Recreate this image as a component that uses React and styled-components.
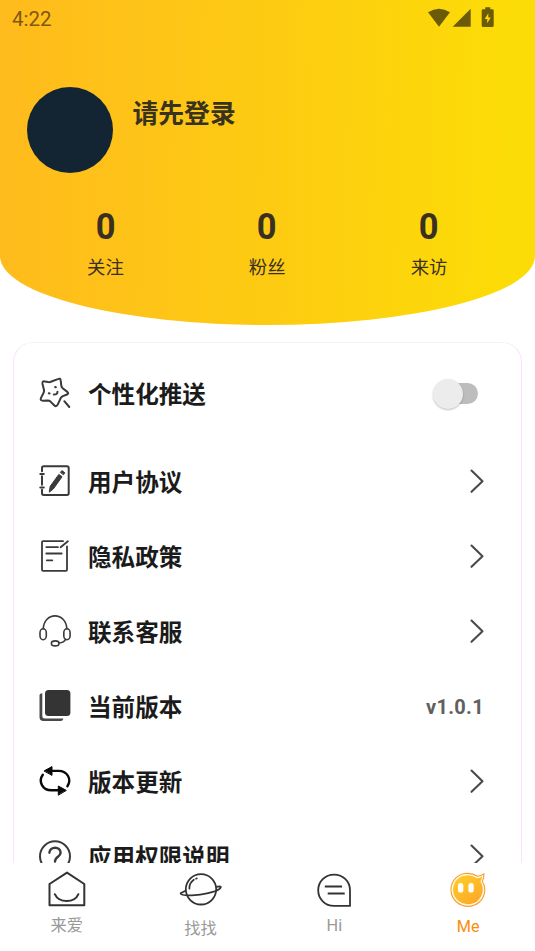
import React from "react"
import styled, { createGlobalStyle } from "styled-components"

const GlobalStyle = createGlobalStyle`
    * {
        box-sizing: border-box;
    }
    body {
        margin: 0;
        background: #fff;
        font-family: Roboto, "Noto Sans CJK SC", sans-serif;
    }
    svg {
        display: block;
        overflow: visible;
        flex-shrink: 0;
    }
`

const Screen = styled.div`
    display: flex;
    flex-direction: column;
    width: 535px;
    height: 951px;
    overflow: hidden;
    background: #fff;
`

const Header = styled.header`
    flex-shrink: 0;
    height: 325px;
    background: linear-gradient(91deg, #ffbb1d 0%, #fdcb12 50%, #fcdc06 95%);
    border-radius: 0 0 50% 50% / 0 0 69px 69px;
`

const StatusBar = styled.div`
    display: flex;
    justify-content: space-between;
    height: 38px;
    padding: 0 41px 0 12px;
    color: #80590f;
    font-size: 20.5px;
    line-height: 38px;
`

const StatusIcons = styled.div`
    display: flex;
    padding-top: 7px;
    color: #6b5a08;
`

const Profile = styled.div`
    display: flex;
    padding: 49px 0 0 26.5px;
`

const Avatar = styled.div`
    width: 86px;
    height: 86px;
    border-radius: 50%;
    background: #132432;
`

const LoginText = styled.div`
    margin: 8px 0 0 20px;
    color: #38321f;
    font-size: 25.8px;
    font-weight: 700;
    line-height: 38px;
`

const Stats = styled.div`
    display: flex;
    padding: 30px 25px 0 24.5px;
`

const Stat = styled.div`
    flex: 1;
    display: flex;
    flex-direction: column;
    align-items: center;
    color: #3a3022;
`

const StatNumber = styled.span`
    padding-top: 1px;
    font-size: 37.5px;
    font-weight: 700;
    line-height: 44px;
    transform: scaleX(0.92);
`

const StatLabel = styled.span`
    margin-top: 6px;
    font-size: 18.4px;
    line-height: 28px;
`

const Card = styled.main`
    flex: 1;
    min-height: 0;
    margin: 17px 13px 0;
    overflow: hidden;
    border: 1px solid #fae3fd;
    border-top-color: #f7f1f8;
    border-bottom: none;
    border-radius: 20px 20px 0 0;
`

const Row = styled.div`
    display: flex;
    align-items: center;
    height: ${({ $height }) => $height || 75}px;
    padding: 0 37px 0 24px;
`

const RowLabel = styled.span`
    flex: 1;
    margin-left: 16px;
    padding-top: 2px;
    color: #1b1b1b;
    font-size: 23.6px;
    font-weight: 700;
    line-height: 34px;
`

const Version = styled.span`
    color: #606060;
    font-size: 20px;
    font-weight: 700;
    letter-spacing: 0.3px;
`

const Switch = styled.div`
    display: flex;
    align-items: center;
    width: 40px;
    height: 21px;
    margin-right: 6px;
    border-radius: 11px;
    background: #bdbdbd;
`

const Knob = styled.div`
    flex-shrink: 0;
    width: 30px;
    height: 30px;
    margin-left: -5.5px;
    border-radius: 50%;
    background: #ececec;
    box-shadow: 0 1px 2px rgba(0, 0, 0, 0.25);
`

const TabBar = styled.nav`
    display: flex;
    flex-shrink: 0;
    height: 88px;
    background: #fff;
`

const Tab = styled.div`
    flex: 1;
    display: flex;
    flex-direction: column;
    align-items: center;
    padding-top: 6px;
`

const TabLabel = styled.span`
    margin-top: ${({ $gap }) => $gap || 3}px;
    color: ${({ $active }) => ($active ? "#f98e10" : "#999")};
    font-size: 16.3px;
    line-height: 24px;
`

const RowIcon = ({ children, color = "#3a3a3a", stroke = 1.8 }) => (
    <svg width="34" height="34" viewBox="0 0 34 34" fill="none" stroke={color}
        strokeWidth={stroke} strokeLinecap="round" strokeLinejoin="round">
        {children}
    </svg>
)

const StarIcon = () => (
    <RowIcon stroke={2}>
        <path d="M12.8 4.8L19.8 2.1Q22.5 .8 22.7 3.4L23.3 8.6Q23.5 10.1 24.7 11.2L29 14.6Q31.3 16.5 29 17.5L24.9 19.2Q23.3 20 22.6 21.3L19.8 27.4Q18.3 30.4 16.2 28.2L12.5 24.6Q11.3 23.5 9.8 23.5L5 23.7Q1.8 23.7 3 20.9L5.6 15.8Q6.3 14.5 6 13L4.5 7Q4 4.1 6.6 4.4L10.4 5.1Q11.8 5.3 12.8 4.8Z" />
        <path d="M10.8 16.2l.8.3M17.1 10l.8.2M15.8 17.6Q19.4 17.8 19.5 14.8" />
        <path d="M26.3 24.2L31.3 30" />
    </RowIcon>
)

const AgreementIcon = () => (
    <RowIcon stroke={2}>
        <path d="M4 6.3V3Q4 1.3 5.7 1.3H29Q30.7 1.3 30.7 3V28.2Q30.7 29.9 29 29.9H5.7Q4 29.9 4 28.2V24.7M4 11.3V19.7" />
        <path d="M2.3 8.9H5.8M2.3 22.4H5.8" />
        <path d="M11.3 26.8L12.2 21.3L20.8 9.4L24.1 11.7L15.5 23.7ZM22.6 7.2L23.9 5.6L26.8 7.7L25.7 9.4Z" fill="#3a3a3a" strokeWidth="1" />
    </RowIcon>
)

const PrivacyIcon = () => (
    <RowIcon>
        <path d="M25 1.2H5Q4 1.2 4 2.2V29.8Q4 30.8 5 30.8H28Q29 30.8 29 29.8V6.3" />
        <path d="M8.3 7.1H20M8.3 13.5H23.7M8.8 20.3H14.3M22.6 7.2L29.9 1.2" />
    </RowIcon>
)

const ServiceIcon = () => (
    <RowIcon stroke={1.6}>
        <path d="M5.2 13.8C5.8 5.7 10.9 .9 17 .9S28.3 5.7 28.9 13.8" />
        <rect x="2" y="13.7" width="6.3" height="11" rx="3.1" ry="4" />
        <rect x="25.8" y="13.7" width="6.3" height="11" rx="3.1" ry="4" />
        <ellipse cx="17.2" cy="28.4" rx="3.8" ry="2.5" />
        <path d="M21 28Q26.2 27.5 27.6 24.2" />
    </RowIcon>
)

const VersionIcon = () => (
    <RowIcon>
        <rect x="7" y="0" width="25.4" height="26" rx="3.5" fill="#343434" stroke="none" />
        <path d="M1.5 5Q1.7 3.6 4.3 3.3V26.2Q4.3 28.5 6.6 28.5H25.5Q24.9 31 22.6 31H5.5Q1.5 31 1.5 27Z" fill="#484848" stroke="none" />
    </RowIcon>
)

const UpdateIcon = () => (
    <RowIcon color="#090909" stroke={2.4}>
        <path d="M12 5.9H20.5C29.5 5.9 34 14.5 29.4 21.2" />
        <path d="M22 25.3H13.5C4.5 25.3 0 16.5 4.8 9.8" />
        <path d="M6.3 5.8L14 1.6V10ZM28 25.2L20.3 21V29.8Z" fill="#090909" strokeWidth="1" />
    </RowIcon>
)

const PermissionIcon = () => (
    <RowIcon stroke={2}>
        <circle cx="17" cy="16.3" r="15" />
        <path d="M11.4 12.8C11.8 6 22.6 6 22.6 12.8C22.6 17 17 16.5 17 21.5M17 25.3V25.5" strokeWidth="2.4" />
    </RowIcon>
)

const Chevron = () => (
    <svg width="14" height="24" viewBox="0 0 14 24" fill="none" stroke="#4a4a4a" strokeWidth="2.1">
        <path d="M1.5 .5L12.5 11.2L1.5 21.8" strokeLinecap="round" strokeLinejoin="round" />
    </svg>
)

const TabIcon = ({ children }) => (
    <svg width="44" height="40" viewBox="0 0 44 40" fill="none" stroke="#333" strokeWidth="2"
        strokeLinecap="round" strokeLinejoin="round">
        {children}
    </svg>
)

const HomeIcon = () => (
    <TabIcon>
        <path d="M4.5 15L22 3.6L39.3 15V36.2H4.5Z" />
        <path d="M9.8 25.2C14 34.4 29.4 34.4 33.4 25.2" />
    </TabIcon>
)

const PlanetIcon = () => (
    <TabIcon>
        <circle cx="22" cy="20.3" r="15.2" strokeWidth="1.8" />
        <path d="M6 22L1.6 24.3Q2 26.7 13 26.3C24 25.8 36 23.2 40.4 20Q43 17.8 41 17.3L37.2 17.8" strokeWidth="1.7" />
        <path d="M10.4 19.7Q10 14 14.8 10.7M17 9.7L17.8 9.4" strokeWidth="1.7" />
    </TabIcon>
)

const ChatIcon = () => (
    <TabIcon>
        <path d="M22.1 36.9C13 36.9 6.2 29.8 6.2 21.2S13 5.6 22.1 5.6S38 12.7 38 21.2V36.9Z" strokeWidth="1.8" />
        <path d="M12.8 17.6H30M15.7 24.6H32.7" strokeLinecap="butt" />
    </TabIcon>
)

const MeIcon = () => (
    <TabIcon>
        <defs>
            <linearGradient id="face" x1="0" y1="0" x2="0.7" y2="1">
                <stop offset="0" stopColor="#fed029" />
                <stop offset="1" stopColor="#fda927" />
            </linearGradient>
        </defs>
        <path d="M31.5 7.2Q35 7.2 38 4.7Q38 9.3 36.3 12.5C41 19.5 38.5 28.5 33.5 33C27 38.8 17 38.8 10.5 33C4.2 27.5 3 17.7 8.2 10.8C13.5 4 23.5 2.2 31.5 7.2Z" fill="#fff6df" stroke="#f6a034" strokeWidth="1.1" />
        <path d="M30.8 9.3Q34 9.1 36.3 7.4Q35.7 10.5 34.4 12.6C38.5 19 37 26.8 32 31.4C26.5 36.4 17.5 36.4 12 31.6C6.4 26.8 5.4 18.3 9.8 12.1C14.5 5.8 23.3 4.3 30.8 9.3Z" fill="url(#face)" stroke="none" />
        <rect x="12" y="14.1" width="5.3" height="9.4" rx="2.6" fill="#fff" stroke="none" />
        <rect x="22.4" y="14.1" width="5.3" height="9.4" rx="2.6" fill="#fff" stroke="none" />
    </TabIcon>
)

const stats = ["关注", "粉丝", "来访"]

const links = [
    { label: "用户协议", Icon: AgreementIcon },
    { label: "隐私政策", Icon: PrivacyIcon },
    { label: "联系客服", Icon: ServiceIcon },
    { label: "当前版本", Icon: VersionIcon, version: "v1.0.1" },
    { label: "版本更新", Icon: UpdateIcon },
    { label: "应用权限说明", Icon: PermissionIcon },
]

const tabs = [
    { label: "来爱", Icon: HomeIcon, gap: 5 },
    { label: "找找", Icon: PlanetIcon, gap: 8 },
    { label: "Hi", Icon: ChatIcon, gap: 5 },
    { label: "Me", Icon: MeIcon, gap: 6, active: true },
]

const App = () => {
    return (
        <Screen>
            <GlobalStyle />
            <Header>
                <StatusBar>
                    <span>4:22</span>
                    <StatusIcons>
                        <svg width="66" height="21" viewBox="0 0 66 21" fill="currentColor">
                            <path d="M0 5.3Q11-1.8 22 5.3L11 19.7Z" />
                            <path d="M24.7 19.7L42.7 1.7V19.7Z" />
                            <path fillRule="evenodd" d="M57.3 .3H62.3V2.3H64.3Q65.7 2.3 65.7 3.7V18.5Q65.7 20 64.3 20H55.1Q53.7 20 53.7 18.5V3.7Q53.7 2.3 55.1 2.3H57.3ZM60.3 6.3L56.7 12H59.2V16.3L62.7 10.5H60.3Z" />
                        </svg>
                    </StatusIcons>
                </StatusBar>
                <Profile>
                    <Avatar />
                    <LoginText>请先登录</LoginText>
                </Profile>
                <Stats>
                    {stats.map(label => (
                        <Stat key={label}>
                            <StatNumber>0</StatNumber>
                            <StatLabel>{label}</StatLabel>
                        </Stat>
                    ))}
                </Stats>
            </Header>

            <Card>
                <Row $height={101}>
                    <StarIcon />
                    <RowLabel>个性化推送</RowLabel>
                    <Switch>
                        <Knob />
                    </Switch>
                </Row>
                {links.map(({ label, Icon, version }) => (
                    <Row key={label}>
                        <Icon />
                        <RowLabel>{label}</RowLabel>
                        {version ? <Version>{version}</Version> : <Chevron />}
                    </Row>
                ))}
            </Card>

            <TabBar>
                {tabs.map(({ label, Icon, gap, active }) => (
                    <Tab key={label}>
                        <Icon />
                        <TabLabel $gap={gap} $active={active}>{label}</TabLabel>
                    </Tab>
                ))}
            </TabBar>
        </Screen>
    )
}

export default App
